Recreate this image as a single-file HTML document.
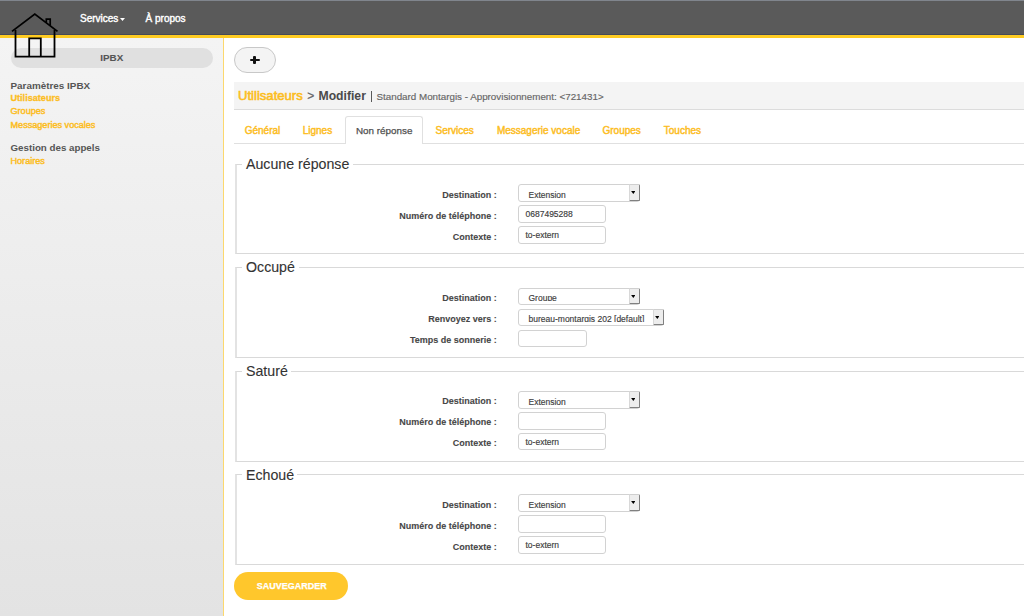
<!DOCTYPE html>
<html><head><meta charset="utf-8">
<style>
*{box-sizing:border-box;margin:0;padding:0}
html,body{width:1024px;height:616px;overflow:hidden;background:#fff;font-family:"Liberation Sans",sans-serif;position:relative}
.t{position:absolute;white-space:nowrap;line-height:1;-webkit-text-stroke:0.25px currentColor}
#hdr{position:absolute;left:0;top:0;width:1024px;height:35px;background:#5a5a5a;border-top:1px solid #80858d}
#hdrline{position:absolute;left:0;top:34px;width:1024px;height:1px;background:#464a56}
#ybar{position:absolute;left:0;top:35px;width:1024px;height:3px;background:#fecb22}
#side{position:absolute;left:0;top:38px;width:223px;height:578px;background:linear-gradient(#f4f4f4,#e3e3e3)}
#sideb{position:absolute;left:223px;top:38px;width:1px;height:578px;background:#fcd86e}
.w{color:#fff;-webkit-text-stroke:0.4px #fff}
.y{color:#fcbd1f;-webkit-text-stroke:0.45px currentColor}
.g{color:#555}
#pill{position:absolute;left:10.5px;top:48px;width:202.5px;height:20px;border-radius:10px;background:#e0e0e0}
#plus{position:absolute;left:234px;top:47px;width:42px;height:26px;border-radius:13px;background:#f4f4f4;border:1px solid #c8c8c8}
#bc{position:absolute;left:234px;top:82px;width:790px;height:28px;background:#f4f4f4;border-bottom:1px solid #dcdcdc}
#tabline{position:absolute;left:234px;top:143px;width:790px;height:1px;background:#e0e0e0}
#atab{position:absolute;left:345px;top:116px;width:78px;height:28px;background:#fff;border:1px solid #e0e0e0;border-bottom:none;border-radius:3px 3px 0 0}
.fs{position:absolute;left:235px;width:800px;border:1px solid #d9d9d9;border-left:2px solid #e3e3e3;border-right:none}
.lg{position:absolute;height:3px;background:#fff}
.lab{position:absolute;white-space:nowrap;line-height:1;font-size:9px;font-weight:bold;color:#474747;text-align:right;width:200px;-webkit-text-stroke:0.1px currentColor}
.inp{position:absolute;left:518px;border:1px solid #d2d2d2;border-radius:3px;background:#fff}
.clip{position:absolute;left:0;top:0;right:0;bottom:1px;overflow:hidden}
.clip span{position:absolute;left:6.5px;top:4px;font-size:8.5px;line-height:1;color:#3c3c3c;white-space:nowrap;-webkit-text-stroke:0.15px currentColor}
.sel .clip{right:11px;bottom:2px}
.sel .clip span{left:9.5px;top:6px}
.btn{position:absolute;right:-0.5px;top:-1px;bottom:0;width:11px;background:#ededed;border-top:1px solid #cfcfcf;border-left:1px solid #d8d8d8;border-right:1.7px solid #808080;border-bottom:1.4px solid #808080;border-radius:0 1.5px 1.5px 0}
.btn i{position:absolute;left:1.6px;top:6px;width:4.4px;height:3px;background:#000;clip-path:polygon(0 0,100% 0,50% 100%)}
#save{position:absolute;left:234px;top:572px;width:114px;height:28px;border-radius:14px;background:#ffc72c}
</style></head><body>
<div id="hdr"></div><div id="hdrline"></div><div id="ybar"></div>
<div id="side"></div><div id="sideb"></div>
<div class="t w" style="left:80px;top:14.3px;font-size:10px">Services</div>
<div style="position:absolute;left:119.8px;top:17.8px;width:5.4px;height:3.3px;background:#fff;clip-path:polygon(0 0,100% 0,50% 100%)"></div>
<div class="t w" style="left:145.6px;top:14.3px;font-size:10px">À propos</div>

<div id="pill"></div>
<div class="t g" style="left:100.3px;top:53px;font-size:9.8px;font-weight:bold;-webkit-text-stroke:0.1px">IPBX</div>
<svg style="position:absolute;left:0;top:0" width="70" height="70" viewBox="0 0 70 70">
<path d="M12 31.4 L34.8 14.1 L57.5 31.4" fill="none" stroke="#000" stroke-width="1.8"/>
<path d="M15.5 30 V56.6 H54.5 V30" fill="none" stroke="#000" stroke-width="1.8"/>
<path d="M29.2 56.6 V38.3 H40.8 V56.6" fill="none" stroke="#000" stroke-width="1.8"/>
<path d="M46.3 22.5 V19.2 H50.2 V25.6" fill="none" stroke="#000" stroke-width="1.7"/>
</svg>

<div class="t g" style="left:10.5px;top:81.2px;font-size:9.9px;font-weight:bold;-webkit-text-stroke:0">Paramètres IPBX</div>
<div class="t y" style="left:10.5px;top:93.6px;font-size:9.1px;font-weight:bold;-webkit-text-stroke:0.3px">Utilisateurs</div>
<div class="t y" style="left:10.5px;top:106.8px;font-size:9.1px">Groupes</div>
<div class="t y" style="left:10.5px;top:121.2px;font-size:9.1px">Messageries vocales</div>
<div class="t g" style="left:10.5px;top:143.1px;font-size:9.75px;font-weight:bold;-webkit-text-stroke:0">Gestion des appels</div>
<div class="t y" style="left:10.5px;top:156.5px;font-size:9.1px">Horaires</div>

<div id="plus"></div>
<div style="position:absolute;left:250.2px;top:58.7px;width:9.4px;height:2.6px;background:#111;border-radius:1px"></div>
<div style="position:absolute;left:253.4px;top:56px;width:3px;height:8px;background:#111;border-radius:1px"></div>

<div id="bc"></div>
<div class="t y" style="left:238px;top:88.9px;font-size:13.1px;-webkit-text-stroke:0.6px">Utilisateurs</div>
<div class="t" style="left:307.3px;top:89.8px;font-size:12px;color:#666">&gt;</div>
<div class="t" style="left:318.5px;top:89.8px;font-size:12.2px;font-weight:bold;color:#4a4a4a;-webkit-text-stroke:0">Modifier</div>
<div style="position:absolute;left:371.3px;top:90.6px;width:1.2px;height:11.4px;background:#5a5a5a"></div>
<div class="t" style="left:376.5px;top:91.5px;font-size:9.8px;color:#666;-webkit-text-stroke:0.15px">Standard Montargis - Approvisionnement: &lt;721431&gt;</div>

<div id="tabline"></div>
<div id="atab"></div>
<div class="t y" style="left:244.7px;top:126.3px;font-size:10px">Général</div>
<div class="t y" style="left:302.7px;top:126.3px;font-size:10px">Lignes</div>
<div class="t" style="left:356px;top:126.3px;font-size:9.85px;color:#505050">Non réponse</div>
<div class="t y" style="left:435.5px;top:126.3px;font-size:10px">Services</div>
<div class="t y" style="left:496.9px;top:126.3px;font-size:10px">Messagerie vocale</div>
<div class="t y" style="left:602.5px;top:126.3px;font-size:10px">Groupes</div>
<div class="t y" style="left:663.8px;top:126.3px;font-size:10px">Touches</div>

<!-- FS1 -->
<div class="fs" style="top:164px;height:90px"></div>
<div class="lg" style="left:242px;top:163px;width:111px"></div>
<div class="t" style="left:246px;top:157px;font-size:14.2px;color:#333;-webkit-text-stroke:0.1px">Aucune réponse</div>
<div class="lab" style="left:296.8px;top:191.2px">Destination :</div>
<div class="lab" style="left:296.8px;top:212.1px">Numéro de téléphone :</div>
<div class="lab" style="left:296.8px;top:232.9px">Contexte :</div>

<div class="inp sel" style="top:184px;width:122px;height:18px"><div class="clip"><span>Extension</span></div><div class="btn"><i></i></div></div>
<div class="inp" style="top:205px;width:88px;height:18px"><div class="clip"><span>0687495288</span></div></div>
<div class="inp" style="top:226px;width:88px;height:18px"><div class="clip"><span>to-extern</span></div></div>

<!-- FS2 -->
<div class="fs" style="top:267px;height:91px"></div>
<div class="lg" style="left:242px;top:266px;width:57px"></div>
<div class="t" style="left:246px;top:260.4px;font-size:14.2px;color:#333;-webkit-text-stroke:0.1px">Occupé</div>
<div class="lab" style="left:296.8px;top:293.5px">Destination :</div>
<div class="lab" style="left:296.8px;top:315.3px">Renvoyez vers :</div>
<div class="lab" style="left:296.8px;top:336.2px">Temps de sonnerie :</div>

<div class="inp sel" style="top:288px;width:122px;height:17px"><div class="clip" style="bottom:3px"><span style="top:5px">Groupe</span></div><div class="btn"><i></i></div></div>
<div class="inp sel" style="top:309px;width:146px;height:17px"><div class="clip" style="bottom:3px"><span style="top:5px">bureau-montargis 202 [default]</span></div><div class="btn"><i></i></div></div>
<div class="inp" style="top:330px;width:69px;height:17px"></div>

<!-- FS3 -->
<div class="fs" style="top:371px;height:91px"></div>
<div class="lg" style="left:242px;top:370px;width:49px"></div>
<div class="t" style="left:246px;top:363.8px;font-size:14.2px;color:#333;-webkit-text-stroke:0.1px">Saturé</div>
<div class="lab" style="left:296.8px;top:397px">Destination :</div>
<div class="lab" style="left:296.8px;top:417.8px">Numéro de téléphone :</div>
<div class="lab" style="left:296.8px;top:438.6px">Contexte :</div>

<div class="inp sel" style="top:391px;width:122px;height:18px"><div class="clip"><span>Extension</span></div><div class="btn"><i></i></div></div>
<div class="inp" style="top:412px;width:88px;height:18px"></div>
<div class="inp" style="top:433px;width:88px;height:17px"><div class="clip"><span>to-extern</span></div></div>

<!-- FS4 -->
<div class="fs" style="top:474px;height:91px"></div>
<div class="lg" style="left:242px;top:473px;width:55px"></div>
<div class="t" style="left:246px;top:467.7px;font-size:14.2px;color:#333;-webkit-text-stroke:0.1px">Echoué</div>
<div class="lab" style="left:296.8px;top:501.4px">Destination :</div>
<div class="lab" style="left:296.8px;top:522.2px">Numéro de téléphone :</div>
<div class="lab" style="left:296.8px;top:543px">Contexte :</div>

<div class="inp sel" style="top:494px;width:122px;height:18px"><div class="clip"><span>Extension</span></div><div class="btn"><i></i></div></div>
<div class="inp" style="top:515px;width:88px;height:18px"></div>
<div class="inp" style="top:536px;width:88px;height:18px"><div class="clip"><span>to-extern</span></div></div>

<div id="save"></div>
<div class="t" style="left:256.8px;top:581.5px;font-size:9px;font-weight:bold;color:#fff">SAUVEGARDER</div>
</body></html>
